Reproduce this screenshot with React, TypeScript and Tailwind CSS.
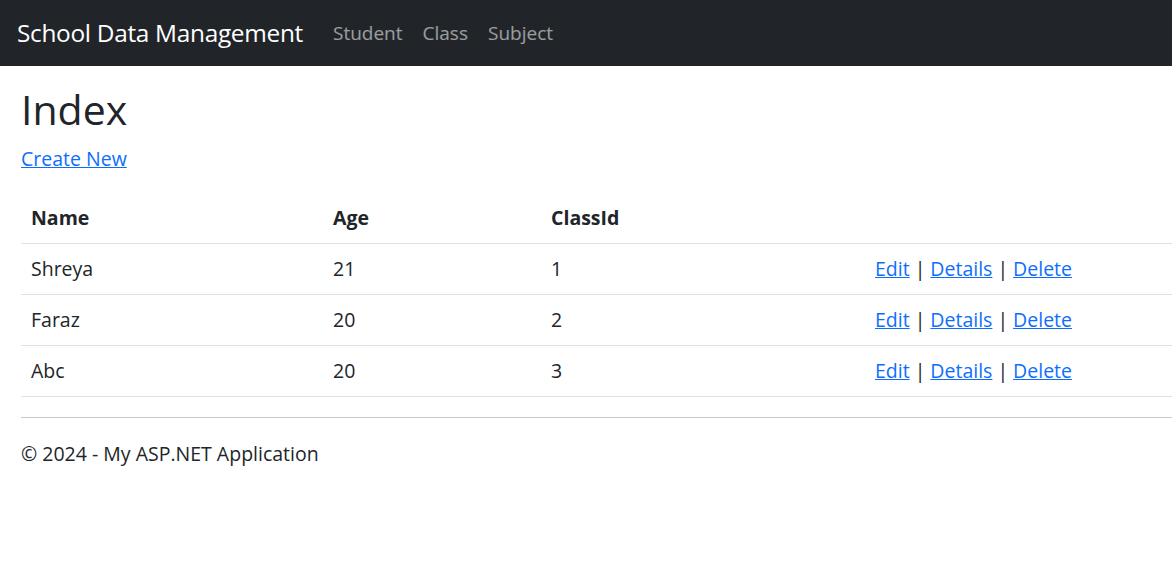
import React from 'react';

// Student rows shown in the index table
const students = [
    { name: 'Shreya', age: 21, classId: 1 },
    { name: 'Faraz', age: 20, classId: 2 },
    { name: 'Abc', age: 20, classId: 3 },
];

const navLinks = ['Student', 'Class', 'Subject'];

const Sep: React.FC = () => <span className="mx-[5px]">|</span>;

const ActionLinks: React.FC = () => (
    <span>
        <a href="#" className="text-[#0d6efd] underline">Edit</a>
        <Sep />
        <a href="#" className="text-[#0d6efd] underline">Details</a>
        <Sep />
        <a href="#" className="text-[#0d6efd] underline">Delete</a>
    </span>
);

export default function App() {
    return (
        <div
            className="min-h-screen w-full overflow-x-hidden bg-white text-[#212529] text-[19.5px] leading-[30px]"
            style={{ fontFamily: '"Open Sans", "Noto Sans", sans-serif' }}
        >
            {/* Top navbar */}
            <nav className="h-[66px] bg-[#212529] flex items-center pl-[17px]">
                <a href="#" className="text-white text-[24.4px] tracking-[-0.3px] mr-[20px]">
                    School Data Management
                </a>
                <ul className="flex items-center">
                    {navLinks.map((link) => (
                        <li key={link}>
                            <a href="#" className="block px-[10px] text-[19px] text-white/55">
                                {link}
                            </a>
                        </li>
                    ))}
                </ul>
            </nav>

            {/* Page content */}
            <main className="w-[1400px] pl-[21px] pt-[19px]">
                <h1 className="text-[41px] leading-[1.2] font-medium mb-[10px]">Index</h1>
                <p className="mb-[19px]">
                    <a href="#" className="text-[#0d6efd] underline">Create New</a>
                </p>

                <table className="w-full border-collapse mb-[20px]">
                    <thead>
                        <tr className="border-b border-[#dee2e6]">
                            <th className="w-[302px] text-left font-bold px-[10px] py-[10px]">Name</th>
                            <th className="w-[218px] text-left font-bold px-[10px] py-[10px]">Age</th>
                            <th className="w-[324px] text-left font-bold px-[10px] py-[10px]">ClassId</th>
                            <th className="px-[10px] py-[10px]"></th>
                        </tr>
                    </thead>
                    <tbody>
                        {students.map((s) => (
                            <tr key={s.name} className="border-b border-[#dee2e6]">
                                <td className="px-[10px] py-[10px]">{s.name}</td>
                                <td className="px-[10px] py-[10px]">{s.age}</td>
                                <td className="px-[10px] py-[10px]">{s.classId}</td>
                                <td className="px-[10px] py-[10px]">
                                    <ActionLinks />
                                </td>
                            </tr>
                        ))}
                    </tbody>
                </table>

                <hr className="border-t border-[#c8c9ca] my-0" />
                <footer className="pt-[21px]">
                    <p>&copy; 2024 - My ASP.NET Application</p>
                </footer>
            </main>
        </div>
    );
}
